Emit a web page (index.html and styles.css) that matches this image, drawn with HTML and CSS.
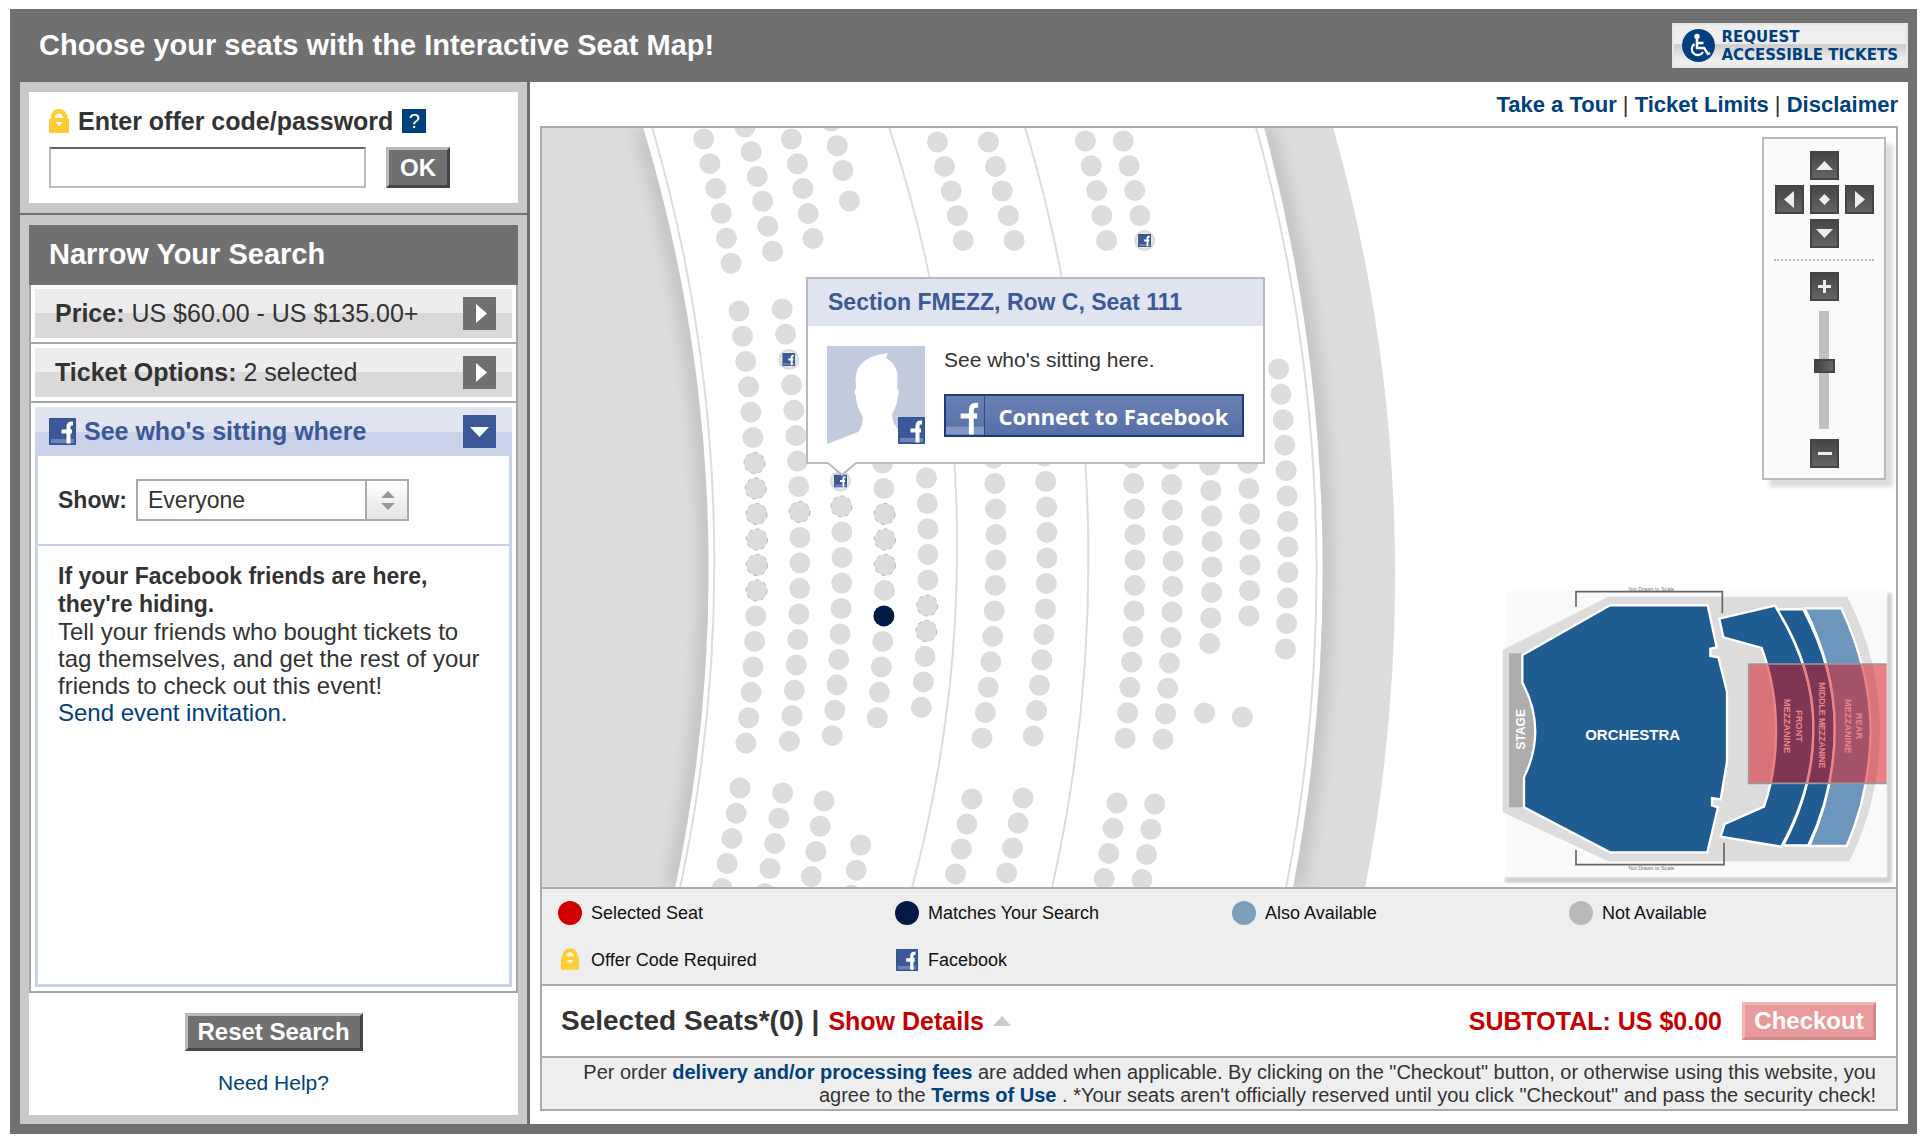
FILE: index.html
```html
<!DOCTYPE html>
<html lang="en">
<head>
<meta charset="UTF-8" />
<meta name="viewport" content="width=device-width, initial-scale=1" />
<title>Interactive Seat Map</title>
<link rel="stylesheet" href="styles.css">
</head>
<body>
<svg class="defs" width="0" height="0" aria-hidden="true">
    <symbol id="fb" viewBox="0 0 27 27">
        <rect width="27" height="27" rx="1" fill="#33528f"/>
        <rect x="1" y="1" width="25" height="25" fill="#3b5998"/>
        <rect x="2" y="21" width="23" height="4" fill="#6d84b4"/>
        <path d="M24 5.500h-1.500q-3 0-3 3.500v16.500M12.500 13.500h10.500" fill="none" stroke="#fff" stroke-width="4"/>
    </symbol>
    <symbol id="lock" viewBox="0 0 20 24">
        <path d="M0 10h1.500C1.500 4 5 0 10 0s8.500 4 8.500 10H20v14H0z" fill="#fc3"/>
        <path d="M5.500 9C6 6 8 4.500 10 4.500S14 6 14.500 9z" fill="#fff" opacity=".85"/>
        <path d="M6.500 13h7L10 17z" fill="#fff"/>
    </symbol>
</svg>

<div class="frame">
    <header class="top">
        <h1>Choose your seats with the Interactive Seat Map!</h1>
        <button class="accessible" type="button">
            <svg width="33" height="33" viewBox="0 0 33 33">
                <circle cx="16.500" cy="16.500" r="16.500" fill="#00407f"/>
                <circle cx="15" cy="7.500" r="2.700" fill="#fff"/>
                <path d="M15 10v9h7l4 6 2-1M15.500 14h6" fill="none" stroke="#fff" stroke-width="2.500"/>
                <path d="M12.500 15a6 6 0 1 0 8.500 8" fill="none" stroke="#fff" stroke-width="2.200"/>
            </svg>
            <span>REQUEST<br>ACCESSIBLE TICKETS</span>
        </button>
    </header>

    <div class="columns">
        <aside class="sidebar">
            <section class="offer">
                <div class="offer-box">
                    <div class="offer-label">
                        <svg width="20" height="24"><use href="#lock"/></svg>
                        <label for="code">Enter offer code/password</label>
                        <button class="help" type="button">?</button>
                    </div>
                    <div class="offer-form">
                        <input type="text" id="code">
                        <button class="btn ok" type="button">OK</button>
                    </div>
                </div>
            </section>

            <section class="narrow">
                <h2>Narrow Your Search</h2>
                <div class="filters">
                    <div class="filter">
                        <button class="filter-bar" type="button">
                            <span><b>Price:</b> US $60.00 - US $135.00+</span>
                            <span class="arrow"><svg width="33" height="33"><path d="M13 7v19l11-9.500z" fill="#fff"/></svg></span>
                        </button>
                    </div>
                    <div class="filter">
                        <button class="filter-bar" type="button">
                            <span><b>Ticket Options:</b> 2 selected</span>
                            <span class="arrow"><svg width="33" height="33"><path d="M13 7v19l11-9.500z" fill="#fff"/></svg></span>
                        </button>
                    </div>
                    <div class="filter open">
                        <button class="filter-bar social" type="button">
                            <svg width="27" height="27"><use href="#fb"/></svg>
                            <b>See who's sitting where</b>
                            <span class="arrow"><svg width="33" height="33"><path d="M7 12h19l-9.500 10z" fill="#fff"/></svg></span>
                        </button>
                        <div class="panel">
                            <div class="show">
                                <label for="show">Show:</label>
                                <div class="select">
                                    <select id="show">
                                        <option>Everyone</option>
                                        <option>Friends</option>
                                    </select>
                                    <svg width="42" height="38"><path d="M14 17h14l-7-7zM14 22h14l-7 7z" fill="#999"/></svg>
                                </div>
                            </div>
                            <div class="message">
                                <b>If your Facebook friends are here, they're hiding.</b>
                                <p>Tell your friends who bought tickets to tag themselves, and get the rest of your friends to check out this event!</p>
                                <a href="#">Send event invitation.</a>
                            </div>
                        </div>
                    </div>
                </div>
                <div class="narrow-footer">
                    <button class="btn reset" type="button">Reset Search</button>
                    <a href="#">Need Help?</a>
                </div>
            </section>
        </aside>

        <main class="main">
            <nav class="links">
                <a href="#">Take a Tour</a> | <a href="#">Ticket Limits</a> | <a href="#">Disclaimer</a>
            </nav>
            <div class="box">
                <div class="map">
                    <svg class="seats" width="1354" height="759" viewBox="542 128 1354 759">
                        <defs>
                            <filter id="soft" x="-50%" y="-10%" width="200%" height="120%"><feGaussianBlur stdDeviation="9"/></filter>
                            <clipPath id="leftWall"><path d="M540 127H643A1526 1526 0 0 1 675 888H540z"/></clipPath>
                            <clipPath id="rightWall"><path d="M1264 127A1708 1708 0 0 1 1293 888H1365A1645 1645 0 0 0 1333 127z"/></clipPath>
                        </defs>
                        <g clip-path="url(#leftWall)">
                            <rect x="540" y="120" width="200" height="780" fill="#dcdcdc"/>
                            <path d="M643 127A1526 1526 0 0 1 675 888" class="shade"/>
                        </g>
                        <g clip-path="url(#rightWall)">
                            <rect x="1250" y="120" width="160" height="780" fill="#dcdcdc"/>
                            <path d="M1264 127A1708 1708 0 0 1 1293 888" class="shade"/>
                        </g>
                        <path class="aisle" d="M652 127A1556 1556 0 0 1 680 888M889 127A1322 1322 0 0 1 912 888M1025 127A1504 1504 0 0 1 1052 888M1256 127A1660 1660 0 0 1 1286 888"/>
                        <g id="seatLayer"></g>
                    </svg>

                    <div class="popup">
                        <h3>Section FMEZZ, Row C, Seat 111</h3>
                        <div class="popup-body">
                            <svg width="98" height="98" viewBox="0 0 98 98">
                                <rect width="98" height="98" fill="#c3cbdf"/>
                                <path d="M0 98L31 86Q36 80 36 71Q29 61 29 50Q27 48 28 44Q29 43 29 41Q27 25 34 18Q43 9 61 7L59 12Q68 17 70 26Q71 32 70 42Q73 44 71 50Q70 60 65 68Q65 76 70 82V98z" fill="#fff"/>
                                <rect x="70" y="83" width="28" height="15" fill="#fff"/>
                                <use href="#fb" x="71" y="71" width="27" height="27"/>
                            </svg>
                            <div class="popup-text">
                                <p>See who's sitting here.</p>
                                <button class="connect" type="button">
                                    <svg width="39" height="39" viewBox="0 0 39 39">
                                        <path d="M0 31h39v8H0z" fill="#8497c0"/>
                                        <path d="M33 9h-2q-5 0-5 5v25M15 20h17" fill="none" stroke="#fff" stroke-width="5"/>
                                    </svg>
                                    <span>Connect to Facebook</span>
                                </button>
                            </div>
                        </div>
                        <svg class="tip" width="28" height="14"><path d="M0 0L14 13L28 0z" fill="#fff"/><path d="M0 1L14 13L28 1" fill="none" stroke="#bbb" stroke-width="2"/></svg>
                    </div>

                    <div class="controls">
                        <div class="pad">
                            <button class="nav up" type="button" aria-label="Up"><svg width="29" height="29"><path d="M6 19h17l-8.500-9z"/></svg></button>
                            <button class="nav left" type="button" aria-label="Left"><svg width="29" height="29"><path d="M19 6v17l-10-8.500z"/></svg></button>
                            <button class="nav center" type="button" aria-label="Center"><svg width="29" height="29"><path d="M14.500 9l5.500 5.500-5.500 5.500L9 14.500z"/></svg></button>
                            <button class="nav right" type="button" aria-label="Right"><svg width="29" height="29"><path d="M10 6v17l10-8.500z"/></svg></button>
                            <button class="nav down" type="button" aria-label="Down"><svg width="29" height="29"><path d="M6 10h17l-8.500 9z"/></svg></button>
                        </div>
                        <div class="zoom">
                            <button class="nav" type="button" aria-label="Zoom in"><svg width="29" height="29"><path d="M13 8h3v5h5v3h-5v5h-3v-5H8v-3h5z"/></svg></button>
                            <input type="range" min="0" max="100" value="46" aria-label="Zoom">
                            <button class="nav" type="button" aria-label="Zoom out"><svg width="29" height="29"><path d="M8 13h14v3H8z"/></svg></button>
                        </div>
                    </div>

                    <svg class="overview" width="396" height="300" viewBox="30 45 1188 900">
                        <defs><filter id="drop"><feGaussianBlur stdDeviation="5"/></filter></defs>
                        <path d="M45 922H1190V70H1205V938H45z" fill="#ccc" filter="url(#drop)"/>
                        <rect x="45" y="63" width="1145" height="858" fill="#fafafa"/>
                        <path d="M38 240L355 80H1072Q1170 270 1170 478Q1170 690 1078 874H355L38 726z" fill="#dcdcdc"/>
                        <path d="M258 110V65H697V130M258 840V884H702V818" fill="none" stroke="#666" stroke-width="5"/>
                        <text x="484" y="62" font-size="16" text-anchor="middle" fill="#777">Not Drawn to Scale</text>
                        <text x="484" y="900" font-size="16" text-anchor="middle" fill="#777">Not Drawn to Scale</text>
                        <path d="M57 250H97V335Q180 478 100 622V712H57z" fill="#adadad"/>
                        <g fill="#1e5c91" stroke="#fff" stroke-width="7">
                            <path d="M97 255L360 106H653L680 232L661 236V258L685 262L711 365V575L692 688L666 684V706L684 712L652 847H360L102 712V622Q172 478 97 338z"/>
                            <path d="M688 146L855 107Q974 300 970 478Q972 650 874 830L692 800L704 762L822 710Q860 600 858 478Q858 350 815 234L700 202z"/>
                            <path d="M862 118H940Q1036 300 1034 478Q1034 660 955 826H880Q972 650 970 478Q974 300 862 118z"/>
                            <path d="M944 115H1054Q1140 300 1142 478Q1140 670 1070 828H958Q1034 660 1034 478Q1036 300 944 115z" fill="#6c96bb"/>
                        </g>
                        <g class="names">
                            <text transform="translate(104 478) rotate(-90)" font-size="36">STAGE</text>
                            <text x="428" y="511" font-size="45">ORCHESTRA</text>
                            <text transform="translate(919 468) rotate(90)" font-size="28">FRONT</text>
                            <text transform="translate(883 468) rotate(90)" font-size="28">MEZZANINE</text>
                            <text transform="translate(988 466) rotate(90)" font-size="26">MIDDLE MEZZANINE</text>
                            <text transform="translate(1099 468) rotate(90)" font-size="28">REAR</text>
                            <text transform="translate(1064 468) rotate(90)" font-size="28">MEZZANINE</text>
                        </g>
                        <rect x="776" y="282" width="414" height="358" fill="#d9141c" fill-opacity=".52"/>
                        <path d="M1190 282H776V640H1190" fill="none" stroke="#999" stroke-width="5"/>
                    </svg>
                </div>

                <ul class="legend">
                    <li><i class="dot red"></i>Selected Seat</li>
                    <li><i class="dot navy"></i>Matches Your Search</li>
                    <li><i class="dot blue"></i>Also Available</li>
                    <li><i class="dot gray"></i>Not Available</li>
                    <li><svg width="24" height="24"><use href="#lock" x="3" width="18" height="22"/></svg>Offer Code Required</li>
                    <li><svg width="24" height="24"><use href="#fb" x="1" y="1" width="22" height="22"/></svg>Facebook</li>
                </ul>

                <div class="selected">
                    <div class="selected-title">
                        <span>Selected Seats*(0) |</span>
                        <a href="#">Show Details</a>
                        <svg width="18" height="10"><path d="M0 10h18L9 0z" fill="#ccc"/></svg>
                    </div>
                    <div class="checkout">
                        <span>SUBTOTAL: US $0.00</span>
                        <button class="btn pay" type="button">Checkout</button>
                    </div>
                </div>

                <p class="terms">Per order <a href="#">delivery and/or processing fees</a> are added when applicable. By clicking on the "Checkout" button, or otherwise using this website, you agree to the <a href="#">Terms of Use</a> . *Your seats aren't officially reserved until you click "Checkout" and pass the security check!</p>
            </div>
        </main>
    </div>
</div>

<script>
    // Each row of seats is an arc: x = rightmost point, r = radius, cy = center height
    // blocks: [first seat y, number of seats]
    const rows = [
        { x: 757, r: 1633, cy: 553, blocks: [[139, 6], [311, 18], [788, 5]], held: ['1-6', '1-7', '1-8', '1-9', '1-10', '1-11'] },
        { x: 800, r: 1676, cy: 553, blocks: [[127, 6], [309, 18], [793, 5]], held: ['1-8'], fb: ['1-2'] },
        { x: 842, r: 1719, cy: 553, blocks: [[139, 5], [481, 11], [801, 4]], held: ['1-1'], fb: ['1-0'] },
        { x: 885, r: 1761, cy: 553, blocks: [[121, 3], [201, 1], [463, 11], [845, 3]], held: ['2-2', '2-3', '2-4'], match: ['2-6'] },
        { x: 928, r: 1804, cy: 553, blocks: [[478, 10]], held: ['0-5', '0-6'] },
        { x: 996, r: 1389, cy: 541, blocks: [[142, 5], [458, 12], [799, 4]] },
        { x: 1047, r: 1389, cy: 541, blocks: [[142, 5], [456, 12], [798, 4]] },
        { x: 1135, r: 1733, cy: 553, blocks: [[141, 5], [458, 12], [803, 4]] },
        { x: 1173, r: 1733, cy: 553, blocks: [[141, 5], [459, 12], [804, 4]], fb: ['0-4'] },
        { x: 1212, r: 1750, cy: 553, blocks: [[465, 8], [713, 1]] },
        { x: 1250, r: 1750, cy: 553, blocks: [[463, 7], [717, 1]] },
        { x: 1288, r: 1800, cy: 553, blocks: [[369, 12]] }
    ];
    const step = 25.5;
    const layer = document.getElementById('seatLayer');
    let html = '';

    rows.forEach(row => {
        row.blocks.forEach((block, b) => {
            let y = block[0];
            for (let i = 0; i < block[1]; i++) {
                const dy = y - row.cy;
                const cos = Math.sqrt(1 - (dy / row.r) ** 2);
                const x = row.x - row.r * (1 - cos);
                const key = b + '-' + i;
                let type = 'seat';
                if (row.held && row.held.includes(key)) type += ' held';
                if (row.match && row.match.includes(key)) type += ' match';
                html += `<circle class="${type}" cx="${x}" cy="${y}" r="10.5"/>`;
                if (row.fb && row.fb.includes(key)) {
                    html += `<circle class="ring" cx="${x}" cy="${y}" r="8"/><use href="#fb" x="${x - 6.5}" y="${y - 6.5}" width="13" height="13"/>`;
                }
                y += step * cos;
            }
        });
    });
    layer.innerHTML = html;
</script>
</body>
</html>
```
FILE: styles.css
```css
*{
    box-sizing: border-box;
}
body{
    margin: 0;
    background-color: white;
    color: #333;
    font-family: "Liberation Sans", Arial, sans-serif;
    font-size: 23px;
}
h1, h2, h3, p, ul{
    margin: 0;
    padding: 0;
}
svg{
    display: block;
    flex: none;
}
button{
    font-family: inherit;
    cursor: pointer;
}
a{
    color: #00407b;
    text-decoration: none;
}
.defs{
    position: absolute;
}
.frame{
    margin: 9px 9px 8px 10px;
    padding: 0 9px 10px 10px;
    background-color: #707070;
}

/* header */
.top{
    display: flex;
    justify-content: space-between;
    align-items: center;
    height: 73px;
    padding-left: 19px;
}
.top h1{
    color: white;
    font-size: 29px;
}
.accessible{
    display: flex;
    align-items: center;
    gap: 6px;
    height: 45px;
    padding: 0 8px;
    border: 2px solid #e6e6e6;
    background: linear-gradient(#eee 45%, #ccc 48%, #eee 85%);
    color: #00407f;
    font: bold 15px/18px "DejaVu Sans", sans-serif;
    text-align: left;
    white-space: nowrap;
}
.columns{
    display: flex;
}

/* sidebar */
.sidebar{
    display: flex;
    flex-direction: column;
    flex: none;
    width: 507px;
    margin-right: 3px;
    background-color: #cac8c8;
}
.offer{
    padding: 10px 9px;
    border-bottom: 2px solid #707070;
}
.offer-box{
    height: 111px;
    padding: 15px 20px;
    background-color: white;
}
.offer-label{
    display: flex;
    align-items: center;
    gap: 9px;
    height: 28px;
    font-size: 25px;
    font-weight: bold;
}
.help{
    width: 24px;
    height: 24px;
    padding: 0;
    border: 0;
    background-color: #00407b;
    color: white;
    font-size: 20px;
    line-height: 24px;
}
.offer-form{
    display: flex;
    gap: 20px;
    margin-top: 12px;
}
.offer-form input{
    width: 317px;
    height: 41px;
    border: 2px solid #bbb;
    border-top-color: #666;
    font-size: 23px;
}
.btn{
    padding: 0;
    border: 3px solid #bbb;
    border-right-color: #444;
    border-bottom-color: #444;
    background-color: #707070;
    color: white;
    font-size: 24px;
    font-weight: bold;
}
.ok{
    width: 64px;
    height: 41px;
}
.narrow{
    display: flex;
    flex-direction: column;
    flex: 1;
    padding: 10px 9px 9px;
}
.narrow h2{
    height: 60px;
    padding-left: 20px;
    background-color: #707070;
    color: white;
    font-size: 29px;
    line-height: 58px;
}
.filters{
    display: flex;
    flex-direction: column;
    flex: 1;
    border: 2px solid #a5a5a5;
    border-top: 0;
    background-color: white;
}
.filter{
    padding: 4px;
    border-bottom: 2px solid #a5a5a5;
}
.filter.open{
    display: flex;
    flex-direction: column;
    flex: 1;
    border-bottom: 0;
}
.filter-bar{
    display: flex;
    align-items: center;
    width: 100%;
    height: 49px;
    padding: 0 16px 0 20px;
    border: 0;
    background: linear-gradient(#ededed 50%, #dad8d8 50%);
    color: #333;
    font-size: 25px;
    text-align: left;
}
.filter-bar.social{
    flex: none;
    gap: 8px;
    padding-left: 14px;
    background: linear-gradient(#e0e4f0 50%, #c9d2e8 50%);
    color: #3b5998;
}
.arrow{
    margin-left: auto;
    background-color: #707070;
}
.social .arrow{
    background-color: #3b5998;
}
.panel{
    flex: 1;
    border: 3px solid #c9d2e8;
    border-top: 0;
}
.show{
    display: flex;
    align-items: center;
    gap: 9px;
    padding: 23px 20px;
    border-bottom: 2px solid #c9d2e8;
    font-weight: bold;
}
.select{
    display: flex;
    flex: none;
    width: 273px;
    height: 42px;
    border: 2px solid #aaa;
    background-color: white;
}
.select select{
    flex: 1;
    padding: 0 10px;
    border: 0;
    appearance: none;
    background-color: white;
    color: #333;
    font: 23px "Liberation Sans", Arial, sans-serif;
}
.select svg{
    border-left: 2px solid #aaa;
    background: linear-gradient(#fff, #e4e4e4);
}
.message{
    padding: 16px 20px;
    font-size: 24px;
    line-height: 27px;
}
.message b{
    font-size: 23px;
}
.narrow-footer{
    display: flex;
    flex-direction: column;
    align-items: center;
    gap: 20px;
    padding: 20px 0;
    background-color: white;
    font-size: 21px;
    line-height: 24px;
}
.reset{
    width: 178px;
    height: 38px;
}

/* main column */
.main{
    flex: 1;
    min-width: 0;
    padding: 0 10px 13px;
    background-color: white;
}
.links{
    height: 44px;
    font-size: 22px;
    line-height: 46px;
    text-align: right;
    white-space: nowrap;
}
.links a, .terms a{
    font-weight: bold;
}
.box{
    border: 2px solid #aaa;
}
.map{
    position: relative;
    height: 759px;
    overflow: hidden;
    background-color: white;
}
.aisle{
    fill: none;
    stroke: #dcdcdc;
    stroke-width: 2;
}
.shade{
    fill: none;
    stroke: #b4b4b4;
    stroke-width: 12;
    filter: url(#soft);
}
.seat{
    fill: #dcdcdc;
}
.held{
    stroke: #b5b5b5;
    stroke-width: 1;
    stroke-dasharray: 4 4;
}
.match{
    fill: #001a46;
}
.ring{
    fill: #eee;
}
.popup{
    position: absolute;
    left: 264px;
    top: 149px;
    width: 459px;
    height: 187px;
    border: 2px solid #bbb;
    background-color: white;
}
.popup h3{
    height: 47px;
    padding-left: 20px;
    background-color: #e0e4f0;
    color: #3b5998;
    font-size: 23px;
    line-height: 47px;
}
.popup-body{
    display: flex;
    gap: 19px;
    padding: 20px 19px;
}
.popup-text p{
    font-size: 21px;
    line-height: 28px;
}
.connect{
    display: flex;
    align-items: center;
    width: 300px;
    height: 43px;
    margin-top: 20px;
    padding: 0;
    border: 2px solid #1d3b78;
    background: linear-gradient(#6a80b3, #5570a8);
    color: white;
    font: bold 22px "Noto Sans", sans-serif;
}
.connect svg{
    border-right: 1px solid #2f4a86;
}
.connect span{
    flex: 1;
    white-space: nowrap;
}
.tip{
    position: absolute;
    left: 20px;
    top: 183px;
}
.controls{
    position: absolute;
    right: 10px;
    top: 9px;
    width: 124px;
    padding: 12px 10px 10px;
    border: 2px solid #bbb;
    background-color: #fafafa;
    box-shadow: 7px 7px 4px #ddd;
}
.pad{
    display: grid;
    grid-template-areas:
    ". up ."
    "left center right"
    ". down .";
    gap: 5px 6px;
    justify-content: center;
    padding-bottom: 11px;
    border-bottom: 2px dotted #bbb;
}
.nav{
    width: 29px;
    height: 29px;
    padding: 0;
    border: 0;
    background: linear-gradient(#444, #666);
    box-shadow: inset 0 0 0 2px #444;
}
.nav path{
    fill: #eee;
}
.up{grid-area: up;}
.left{grid-area: left;}
.center{grid-area: center;}
.right{grid-area: right;}
.down{grid-area: down;}
.zoom{
    display: flex;
    flex-direction: column;
    align-items: center;
    gap: 10px;
    padding-top: 11px;
}
.zoom input{
    width: 21px;
    height: 118px;
    margin: 0;
    appearance: none;
    writing-mode: vertical-lr;
    background: linear-gradient(#c0c0c0, #c0c0c0) center / 10px 100% no-repeat;
}
.zoom input::-webkit-slider-thumb{
    appearance: none;
    width: 21px;
    height: 14px;
    border: 2px solid #444;
    background: linear-gradient(90deg, #444, #666);
}
.overview{
    position: absolute;
    right: 0;
    bottom: 2px;
}
.names{
    fill: white;
    font-weight: bold;
    text-anchor: middle;
}

/* legend and checkout */
.legend{
    display: grid;
    grid-template-columns: repeat(3, 337px) 1fr;
    align-content: center;
    gap: 23px 0;
    height: 97px;
    padding-left: 16px;
    border-top: 2px solid #aaa;
    background-color: #eee;
    color: #111;
    font-size: 18px;
    list-style: none;
}
.legend li{
    display: flex;
    align-items: center;
    gap: 9px;
    height: 24px;
}
.dot{
    width: 24px;
    height: 24px;
    border-radius: 50%;
}
.red{background-color: #d20000;}
.navy{background-color: #001a46;}
.blue{background-color: #7ba0bd;}
.gray{background-color: #b9b9b9;}
.selected{
    display: flex;
    justify-content: space-between;
    align-items: center;
    height: 72px;
    padding: 0 20px 0 19px;
    border-top: 2px solid #aaa;
    font-weight: bold;
}
.selected-title{
    display: flex;
    align-items: center;
    gap: 9px;
    font-size: 28px;
}
.selected-title a{
    font-size: 25px;
}
.selected a, .checkout{
    color: #c60000;
}
.checkout{
    display: flex;
    align-items: center;
    gap: 20px;
    font-size: 25px;
}
.pay{
    width: 134px;
    height: 38px;
    border-color: #f5b5b5 #d08a8a #d08a8a #f5b5b5;
    background-color: #e99a9c;
}
.terms{
    padding: 3px 20px 2px 15px;
    border-top: 2px solid #aaa;
    background-color: #eee;
    font-size: 20px;
    line-height: 23px;
    text-align: right;
}
```
